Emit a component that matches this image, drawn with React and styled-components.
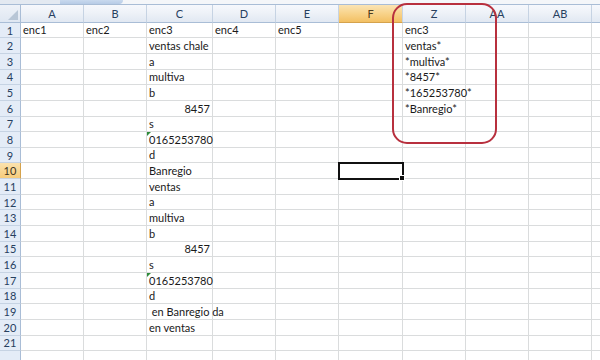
import React from "react";
import styled, { createGlobalStyle, css } from "styled-components";

const GlobalStyle = createGlobalStyle`
  html, body { margin: 0; padding: 0; background: #fff; }
  body { font-family: "Lato", "Liberation Sans", sans-serif; }
`;

const COLS = [
  { key: "A", w: 63 },
  { key: "B", w: 63 },
  { key: "C", w: 66 },
  { key: "D", w: 63 },
  { key: "E", w: 63 },
  { key: "F", w: 64 },
  { key: "Z", w: 63 },
  { key: "AA", w: 63 },
  { key: "AB", w: 63 },
  { key: "AC", w: 40, label: "" },
];

const DATA = {
  1: { A: "enc1", B: "enc2", C: "enc3", D: "enc4", E: "enc5", Z: "enc3" },
  2: { C: "ventas chale", Z: "ventas*" },
  3: { C: "a", Z: "*multiva*" },
  4: { C: "multiva", Z: "*8457*" },
  5: { C: "b", Z: "*165253780*" },
  6: { C: { v: "8457", num: true }, Z: "*Banregio*" },
  7: { C: "s" },
  8: { C: { v: "0165253780", flag: true } },
  9: { C: "d" },
  10: { C: "Banregio" },
  11: { C: "ventas" },
  12: { C: "a" },
  13: { C: "multiva" },
  14: { C: "b" },
  15: { C: { v: "8457", num: true } },
  16: { C: "s" },
  17: { C: { v: "0165253780", flag: true } },
  18: { C: "d" },
  19: { C: "\u00a0en Banregio da" },
  20: { C: "en ventas" },
  21: {},
  22: {},
};

const VISIBLE_ROW_LABELS = 21;
const ACTIVE_COL = "F";
const ACTIVE_ROW = 10;

const Page = styled.div`
  position: relative;
  width: 600px;
  height: 360px;
  overflow: hidden;
  background: #fff;
`;

const TabStrip = styled.div`
  display: flex;
  height: 4px;
  background: #f4f6f9;
  border-bottom: 1px solid #a9bdd6;
`;

const TabLead = styled.div`
  width: 60px;
  background: #e3e9f1;
`;

const Tab = styled.div`
  width: 63px;
  background: linear-gradient(#c9d9ee, #b7cbe6);
  border-bottom-right-radius: 6px;
`;

const Sheet = styled.div`
  display: grid;
  grid-template-columns: 21px ${COLS.map((c) => c.w + "px").join(" ")};
  grid-template-rows: 17.7px repeat(22, 15.65px);
`;

const Corner = styled.div`
  position: relative;
  background: linear-gradient(#eef2f8, #dfe7f2);
  border-right: 1px solid #a9bdd6;
  border-bottom: 1px solid #a9bdd6;
  box-sizing: border-box;
  &::after {
    content: "";
    position: absolute;
    right: 2px;
    bottom: 2px;
    width: 0;
    height: 0;
    border-left: 10px solid transparent;
    border-bottom: 10px solid #b8c6d6;
  }
`;

const ColHead = styled.div`
  display: flex;
  align-items: center;
  justify-content: center;
  box-sizing: border-box;
  font-size: 11px;
  color: #27405f;
  border-right: 1px solid #c6d3e3;
  border-bottom: 1px solid #a9bdd6;
  background: linear-gradient(#f6f8fc 0%, #eef2f8 45%, #e1e8f2 100%);
  ${(p) =>
    p.$active &&
    css`
      background: linear-gradient(#fbe4b4 0%, #f8d38a 50%, #f3c063 100%);
      color: #4a3a20;
      border-bottom-color: #d5a24c;
    `}
`;

const RowHead = styled.div`
  display: flex;
  align-items: center;
  justify-content: center;
  box-sizing: border-box;
  font-size: 11px;
  color: #27405f;
  background: #e4ecf7;
  border-right: 1px solid #a9bdd6;
  border-bottom: 1px solid #c6d3e3;
  ${(p) =>
    p.$active &&
    css`
      background: linear-gradient(#fbe2ae, #f6cc7c);
      color: #3d3420;
      border-right-color: #d5a24c;
    `}
`;

const Cell = styled.div`
  position: relative;
  box-sizing: border-box;
  display: flex;
  align-items: flex-end;
  justify-content: ${(p) => (p.$num ? "flex-end" : "flex-start")};
  padding: 0 2px 1px 2px;
  font-size: 11px;
  line-height: 13px;
  color: #1a1a1a;
  white-space: pre;
  border-right: 1px solid #dadcdd;
  border-bottom: 1px solid #dadcdd;
  overflow: visible;
  ${(p) =>
    p.$flag &&
    css`
      &::before {
        content: "";
        position: absolute;
        left: 0;
        top: 0;
        border-top: 4px solid #2e8b3a;
        border-right: 4px solid transparent;
      }
    `}
  ${(p) =>
    p.$selected &&
    css`
      z-index: 2;
      outline: 2px solid #111;
      outline-offset: -1px;
      &::after {
        content: "";
        position: absolute;
        right: -3px;
        bottom: -3px;
        width: 4px;
        height: 4px;
        background: #111;
        border: 1px solid #fff;
      }
    `}
`;

const CellText = styled.span`
  position: relative;
  z-index: 1;
`;

const RedFrame = styled.div`
  position: absolute;
  left: 392px;
  top: 3px;
  width: 105px;
  height: 141px;
  box-sizing: border-box;
  border: 2.5px solid #b8303e;
  border-radius: 15px;
  pointer-events: none;
  z-index: 5;
`;

function renderCell(row, col) {
  const raw = (DATA[row] || {})[col.key];
  const item = typeof raw === "string" ? { v: raw } : raw || { v: "" };
  return (
    <Cell
      key={`${row}-${col.key}`}
      $num={item.num}
      $flag={item.flag}
      $selected={row === ACTIVE_ROW && col.key === ACTIVE_COL}
    >
      <CellText>{item.v}</CellText>
    </Cell>
  );
}

export default function App() {
  const rows = Array.from({ length: 22 }, (_, i) => i + 1);
  return (
    <>
      <GlobalStyle />
      <Page>
        <TabStrip>
          <TabLead />
          <Tab />
        </TabStrip>
        <Sheet>
          <Corner />
          {COLS.map((c) => (
            <ColHead key={c.key} $active={c.key === ACTIVE_COL}>
              {c.label !== undefined ? c.label : c.key}
            </ColHead>
          ))}
          {rows.map((r) => (
            <React.Fragment key={r}>
              <RowHead $active={r === ACTIVE_ROW}>
                {r <= VISIBLE_ROW_LABELS ? r : ""}
              </RowHead>
              {COLS.map((c) => renderCell(r, c))}
            </React.Fragment>
          ))}
        </Sheet>
        <RedFrame />
      </Page>
    </>
  );
}
